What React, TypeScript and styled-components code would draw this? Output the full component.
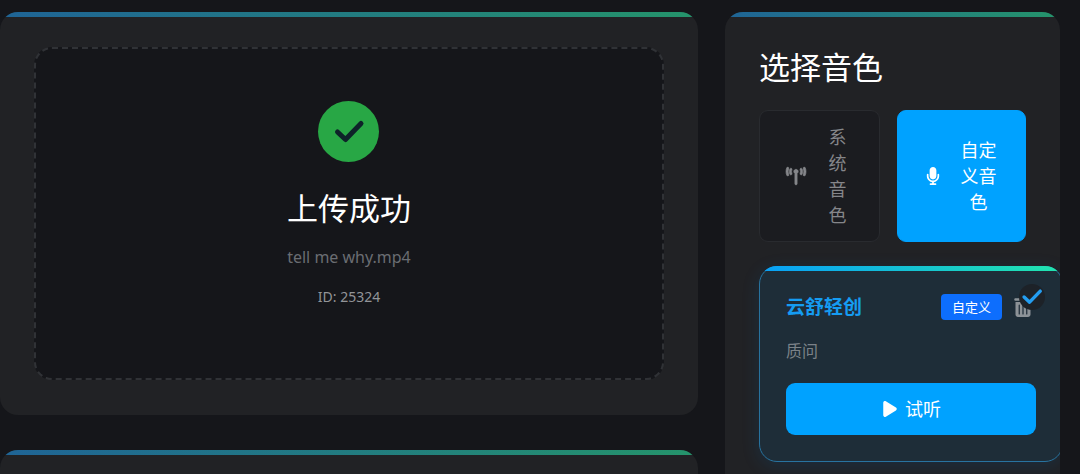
import React from "react";
import styled, { createGlobalStyle, css } from "styled-components";
import { FaMicrophone, FaPlay, FaTowerBroadcast, FaTrashCan } from "react-icons/fa6";

const GlobalStyle = createGlobalStyle`
  * { box-sizing: border-box; }
  body {
    margin: 0;
    background: #15161a;
    color: #fff;
    font-family: "Noto Sans", "Noto Sans CJK SC", sans-serif;
    font-size: 16px;
    line-height: 24px;
  }
  button { font-family: inherit; cursor: pointer; }
  h2, h3, p { margin: 0; }
`;

const Page = styled.main`
  height: 100vh;
  overflow: hidden;
  padding: 12px 20px 0 0;
`;

const Columns = styled.div`
  display: grid;
  grid-template-columns: minmax(0, 25fr) minmax(0, 12fr);
  gap: 27px;
`;

const Stack = styled.div`
  display: flex;
  flex-direction: column;
  gap: 35px;
`;

const Panel = styled.section<{ $minHeight?: number }>`
  position: relative;
  overflow: hidden;
  min-height: ${(p) => p.$minHeight ?? 0}px;
  padding: 35px 34px;
  border-radius: 18px;
  background: #212225;

  &::before {
    content: "";
    position: absolute;
    inset: 0 0 auto;
    height: 5px;
    background: linear-gradient(90deg, #1f6496, #25946b);
  }
`;

const DropZone = styled.div`
  display: flex;
  flex-direction: column;
  align-items: center;
  min-height: 333px;
  padding: 52px 24px 24px;
  border: 2px dashed #303236;
  border-radius: 18px;
  background: #15161a;
`;

const SuccessMark = styled.div`
  display: grid;
  place-items: center;
  width: 61px;
  height: 61px;
  margin-bottom: 26px;
  border-radius: 50%;
  background: #28a745;
  color: #0e2329;
`;

const Heading = styled.h2`
  font-size: 31px;
  font-weight: 400;
  line-height: 40px;
`;

const FileName = styled.p`
  margin-top: 17px;
  color: #6a6d72;
`;

const FileId = styled.p`
  margin-top: 18px;
  color: #929498;
  font-size: 14px;
  line-height: 20px;
`;

const Tabs = styled.div`
  display: grid;
  grid-template-columns: 15fr 16fr;
  gap: 17px;
  margin: 23px 0 24px;
`;

const Tab = styled.button<{ $active?: boolean }>`
  display: flex;
  align-items: center;
  gap: 16px;
  padding: 13px 26px;
  border: 1px solid #292b2f;
  border-radius: 9px;
  background: #1b1c20;
  color: #85868a;
  font-size: 18px;
  line-height: 26px;

  svg { flex: none; }

  ${(p) =>
    p.$active &&
    css`
      border-color: #00a2ff;
      background: #00a2ff;
      color: #fff;
    `}
`;

const TowerIcon = styled(FaTowerBroadcast)`
  stroke: currentColor;
  stroke-width: 18px;
  overflow: visible;
`;

const TabLabel = styled.span`
  flex: 1;
  min-width: 0;
  text-align: center;
`;

const VoiceGrid = styled.div`
  display: grid;
  grid-template-columns: repeat(auto-fill, minmax(304px, 1fr));
`;

const VoiceCard = styled.article`
  position: relative;
  padding: 26px;
  border: 1px solid #28739f;
  border-radius: 18px;
  background: #1e2d38;
  box-shadow: 0 4px 18px rgba(0, 110, 190, 0.16);

  &::before {
    content: "";
    position: absolute;
    inset: -1px;
    border-radius: 18px;
    background: linear-gradient(90deg, #08a0f8, #22e5ae) top / 100% 5px no-repeat;
    pointer-events: none;
  }
`;

const CardHeader = styled.div`
  display: flex;
  align-items: center;
  height: 28px;
`;

const VoiceName = styled.h3`
  margin-right: auto;
  color: #159cf2;
  font-size: 19px;
  font-weight: 700;
`;

const Badge = styled.span`
  padding: 2px 11px;
  border-radius: 4px;
  background: #0d6efd;
  font-size: 13px;
  line-height: 22px;
`;

const DeleteButton = styled.button`
  display: grid;
  place-items: center;
  width: 26px;
  height: 28px;
  margin-left: 8px;
  padding: 0;
  border: 0;
  background: none;
  color: #8c9297;
  font-size: 20px;
`;

const SelectedMark = styled.span`
  position: absolute;
  top: 17px;
  right: 17px;
  display: grid;
  place-items: center;
  width: 26px;
  height: 26px;
  border-radius: 50%;
  background: #1d2228;
  color: #249df0;
`;

const Mood = styled.p`
  margin: 18px 0 20px;
  color: #7b8288;
`;

const PreviewButton = styled.button`
  display: flex;
  align-items: center;
  justify-content: center;
  gap: 6px;
  width: 100%;
  padding: 13px;
  border: 0;
  border-radius: 9px;
  background: #00a2ff;
  color: #fff;
  font-size: 18px;
  line-height: 26px;
`;

function Check({ size, weight }: { size: number; weight: number }) {
  return (
    <svg
      width={size}
      height={size}
      viewBox="0 0 32 32"
      fill="none"
      stroke="currentColor"
      strokeWidth={weight}
      strokeLinecap="round"
      strokeLinejoin="round"
      aria-hidden="true"
    >
      <path d="M4.5 16 12.5 23.5 28 7.5" />
    </svg>
  );
}

export default function App() {
  return (
    <>
      <GlobalStyle />
      <Page>
        <Columns>
          <Stack>
            <Panel>
              <DropZone>
                <SuccessMark>
                  <Check size={32} weight={5} />
                </SuccessMark>
                <Heading>上传成功</Heading>
                <FileName>tell me why.mp4</FileName>
                <FileId>ID: 25324</FileId>
              </DropZone>
            </Panel>
            <Panel $minHeight={200} />
          </Stack>
          <Panel>
            <Heading>选择音色</Heading>
            <Tabs>
              <Tab type="button">
                <TowerIcon size={20} />
                <TabLabel>系统音色</TabLabel>
              </Tab>
              <Tab type="button" $active>
                <FaMicrophone size={18} />
                <TabLabel>自定义音色</TabLabel>
              </Tab>
            </Tabs>
            <VoiceGrid>
              <VoiceCard>
                <CardHeader>
                  <VoiceName>云舒轻创</VoiceName>
                  <Badge>自定义</Badge>
                  <DeleteButton type="button" aria-label="删除">
                    <FaTrashCan />
                  </DeleteButton>
                </CardHeader>
                <SelectedMark>
                  <Check size={22} weight={5} />
                </SelectedMark>
                <Mood>质问</Mood>
                <PreviewButton type="button">
                  <FaPlay />
                  试听
                </PreviewButton>
              </VoiceCard>
            </VoiceGrid>
          </Panel>
        </Columns>
      </Page>
    </>
  );
}
